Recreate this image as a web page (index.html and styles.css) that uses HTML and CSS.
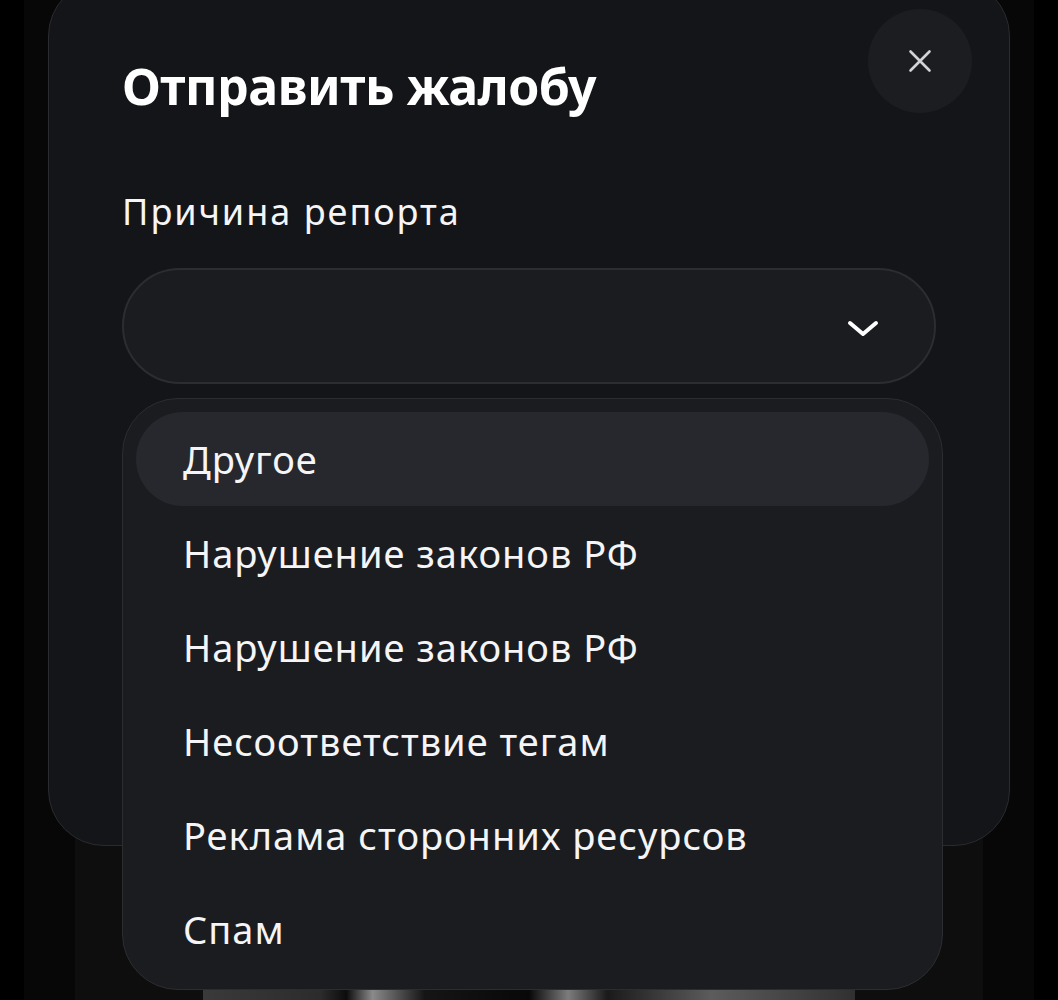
FILE: index.html
```html
<!DOCTYPE html>
<html lang="ru">
<head>
  <meta charset="UTF-8">
  <meta name="viewport" content="width=device-width, initial-scale=1.0">
  <title>Отправить жалобу</title>

  <link rel="stylesheet" href="styles.css">
</head>
<body>
  <div class="page">
    <div class="page-inner">
      <div class="cover"></div>
    </div>
  </div>

  <div class="modal">
    <button class="modal-close" aria-label="Закрыть">
      <svg width="24" height="24" viewBox="0 0 24 24">
        <path d="M2.5 2.5 L21.5 21.5 M21.5 2.5 L2.5 21.5" />
      </svg>
    </button>

    <h2 class="modal-title">Отправить жалобу</h2>

    <label class="field-label">Причина репорта</label>

    <div class="select">
      <div class="select-box">
        <svg width="32" height="18" viewBox="0 0 32 18">
          <path d="M3 3 L16 14 L29 3" />
        </svg>
      </div>

      <ul class="select-menu">
        <li class="select-option active">Другое</li>
        <li class="select-option">Нарушение законов РФ</li>
        <li class="select-option">Нарушение законов РФ</li>
        <li class="select-option">Несоответствие тегам</li>
        <li class="select-option">Реклама сторонних ресурсов</li>
        <li class="select-option">Спам</li>
      </ul>
    </div>
  </div>
</body>
</html>
```

FILE: styles.css
```css
* {
  margin: 0;
  padding: 0;
  box-sizing: border-box;
}

html, body {
  height: 100%;
}

body {
  background: #000000;
  overflow: hidden;
  font-family: 'Noto Sans', 'Open Sans', sans-serif;
  color: #f5f5f7;
}

.page {
  height: 100%;
  margin: 0 24px;
  padding: 0 51px;
  background: #070707;
  display: flex;
}

.page-inner {
  flex: 1;
  background: #0e0e0e;

  display: flex;
  flex-direction: column;
  justify-content: flex-end;
  align-items: center;
}

.cover {
  width: 652px;
  height: 10px;
  background: linear-gradient(90deg, #3a3a3a 0%, #2c2c2c 18%, #0c0c0c 22%, #8a8a8a 26%, #151515 34%, #080808 50%, #7c7c7c 56%, #1a1a1a 62%, #5c5c5c 78%, #303030 100%);
}

/* modal */

.modal {
  position: absolute;
  left: 48px;
  top: -20px;
  width: 962px;
  height: 866px;
  padding: 80px 73px 0;
  background: #141518;
  border: 1.5px solid #2a2b2f;
  border-radius: 56px;
}

.modal-close {
  position: absolute;
  top: 28px;
  right: 37px;
  width: 104px;
  height: 104px;
  border: none;
  border-radius: 50%;
  background: #1c1d21;

  display: flex;
  align-items: center;
  justify-content: center;
}

.modal-close svg path {
  stroke: #d2d3d6;
  stroke-width: 2.6;
  stroke-linecap: round;
  fill: none;
}

.modal-title {
  font-size: 50px;
  line-height: 50px;
  font-weight: 700;
  letter-spacing: -0.5px;
  color: #ffffff;
}

.field-label {
  display: block;
  margin-top: 83px;
  font-size: 36px;
  line-height: 36px;
  font-weight: 400;
  letter-spacing: 2px;
}

/* select */

.select {
  position: relative;
  margin-top: 38px;
}

.select-box {
  height: 116px;
  padding-right: 55px;
  background: #1b1c20;
  border: 2px solid #2c2d31;
  border-radius: 58px;

  display: flex;
  align-items: center;
  justify-content: flex-end;
}

.select-box svg {
  margin-top: 5px;
}

.select-box svg path {
  stroke: #ffffff;
  stroke-width: 4;
  stroke-linecap: round;
  stroke-linejoin: round;
  fill: none;
}

.select-menu {
  position: absolute;
  top: 130px;
  left: 0;
  width: calc(100% + 7px);
  padding: 13px;
  list-style: none;
  background: #1b1c20;
  border: 1.5px solid #2c2d31;
  border-radius: 56px;
}

.select-option {
  height: 94px;
  padding-left: 47px;
  font-size: 38px;
  line-height: 94px;
  letter-spacing: 1px;
  border-radius: 47px;
  white-space: nowrap;
}

.select-option.active {
  background: #27282d;
}
```
